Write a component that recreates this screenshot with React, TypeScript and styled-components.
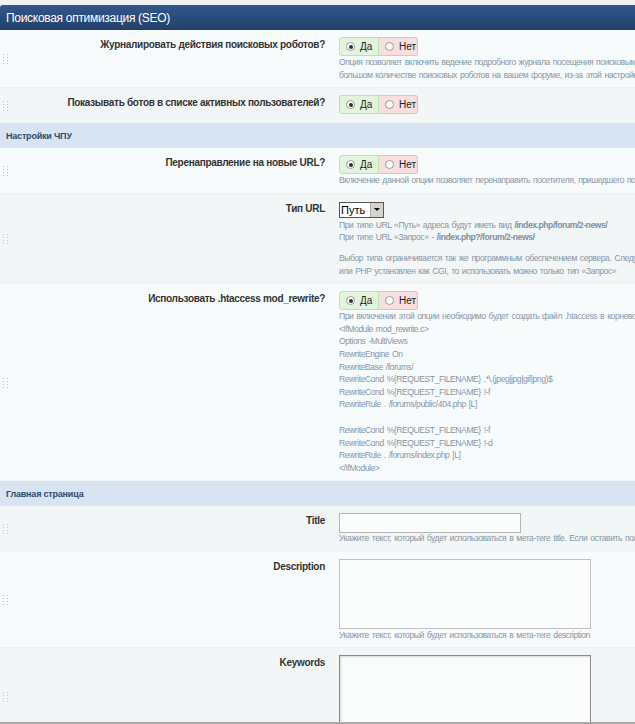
import React from "react"
import styled, { createGlobalStyle } from "styled-components"

const Global = createGlobalStyle`
  html, body { margin: 0; padding: 0; background: #eef2f3; }
  body { font-family: "Liberation Sans", Arial, sans-serif; }
`

const Page = styled.div`
  width: 635px;
  height: 724px;
  box-sizing: border-box;
  padding-top: 5px;
  overflow: hidden;
  border-bottom: 2px solid #a9a9a9;
  background: #eef2f3;
`

const Panel = styled.div`
  width: 900px;
`

const Header = styled.div`
  height: 25px;
  display: flex;
  align-items: center;
  padding-left: 6px;
  border-radius: 3px 0 0 0;
  background: linear-gradient(#30588a, #243f69);
  color: #fff;
  font-size: 12px;
  letter-spacing: -0.3px;
`

const Section = styled.div`
  height: 25px;
  display: flex;
  align-items: center;
  padding-left: 6px;
  background: #d8e4f1;
  color: #2b4c6f;
  font-size: 9px;
  font-weight: bold;
  letter-spacing: -0.2px;
`

const Row = styled.div<{ $alt?: boolean }>`
  display: grid;
  grid-template-columns: 325px 1fr;
  column-gap: 14px;
  padding: 7px 0 6px;
  background: ${p => (p.$alt ? "#f3f6f6" : "#f8fbfc")};
  border-bottom: 1px solid #eef2f2;
`

const LabelCell = styled.div`
  display: flex;
  align-items: flex-start;
`

const Label = styled.div`
  margin-left: auto;
  padding-top: 2px;
  text-align: right;
  color: #333;
  font-size: 10px;
  font-weight: bold;
  line-height: 12px;
  letter-spacing: -0.3px;
`

const HandleBox = styled.svg`
  align-self: center;
  margin-left: 3px;
  flex: none;
`

const Control = styled.div`
  display: flex;
  flex-direction: column;
  align-items: flex-start;
  min-width: 0;
`

const Desc = styled.div`
  color: #8797a7;
  font-size: 8.6px;
  line-height: 12.6px;
  letter-spacing: -0.45px;
  word-spacing: 1px;
  white-space: nowrap;
  b { font-weight: bold; color: #7f8fa0; }
`

const Spacer = styled.div<{ $h: number }>`
  height: ${p => p.$h}px;
`

const Toggle = styled.div`
  display: flex;
  height: 19px;
`

const Choice = styled.label<{ $yes?: boolean }>`
  display: flex;
  align-items: center;
  gap: 5px;
  padding: 0 5px 0 6px;
  width: 27px;
  font-size: 10px;
  color: #222;
  background: ${p => (p.$yes ? "#e2f4dc" : "#f7dfdf")};
  border: 1px solid ${p => (p.$yes ? "#bde0b3" : "#ecbcbc")};
  border-left-width: ${p => (p.$yes ? "1px" : "0")};
  border-radius: ${p => (p.$yes ? "3px 0 0 3px" : "0 3px 3px 0")};
`

const Radio = styled.input`
  appearance: none;
  flex: none;
  box-sizing: border-box;
  margin: 0;
  width: 9px;
  height: 9px;
  border-radius: 50%;
  border: 1px solid #9a9a9a;
  background: #fff;
  position: relative;
  &:checked::after {
    content: "";
    position: absolute;
    left: 1.5px;
    top: 1.5px;
    width: 4px;
    height: 4px;
    border-radius: 50%;
    background: #333;
  }
`

const Select = styled.div`
  display: flex;
  width: 43px;
  height: 14px;
  border: 1px solid #555;
  background: #fff;
  margin: 1px 0 1px;
  font-size: 11px;
  color: #000;
`

const SelectValue = styled.span`
  flex: 1;
  padding-left: 1px;
  line-height: 14px;
`

const SelectArrow = styled.span`
  width: 12px;
  display: flex;
  align-items: center;
  justify-content: center;
  background: #d6d3ce;
  border-left: 1px solid #aaa;
  &::after {
    content: "";
    border-left: 3px solid transparent;
    border-right: 3px solid transparent;
    border-top: 3px solid #000;
  }
`

const TextInput = styled.input`
  width: 182px;
  height: 20px;
  box-sizing: border-box;
  border: 1px solid #b5b5b5;
  background: #fbfdfd;
  margin: 0 0 -1px;
`

const TextArea = styled.textarea<{ $focus?: boolean }>`
  width: 252px;
  height: 70px;
  box-sizing: border-box;
  margin: 0;
  resize: none;
  background: #fbfdfd;
  border: 1px solid ${p => (p.$focus ? "#8a8a8a" : "#c2c2c2")};
  box-shadow: ${p => (p.$focus ? "inset 1px 1px 2px rgba(0,0,0,0.15)" : "none")};
`

const Handle = () => (
  <HandleBox width="6" height="10" viewBox="0 0 6 10">
    {[0, 1].map(c =>
      [0, 1, 2, 3].map(r => (
        <rect key={`${c}${r}`} x={c * 4} y={r * 3} width="1" height="1" fill="#bfc4c8" />
      ))
    )}
  </HandleBox>
)

const YesNo = ({ name }: { name: string }) => (
  <Toggle>
    <Choice $yes>
      <Radio type="radio" name={name} defaultChecked />
      Да
    </Choice>
    <Choice>
      <Radio type="radio" name={name} />
      Нет
    </Choice>
  </Toggle>
)

const Setting = ({ label, alt, children }: { label: string; alt?: boolean; children: React.ReactNode }) => (
  <Row $alt={alt}>
    <LabelCell>
      <Handle />
      <Label>{label}</Label>
    </LabelCell>
    <Control>{children}</Control>
  </Row>
)

const rewrite = [
  "<IfModule mod_rewrite.c>",
  "Options -MultiViews",
  "RewriteEngine On",
  "RewriteBase /forums/",
  "RewriteCond %{REQUEST_FILENAME} .*\\.(jpeg|jpg|gif|png)$",
  "RewriteCond %{REQUEST_FILENAME} !-f",
  "RewriteRule . /forums/public/404.php [L]",
  "",
  "RewriteCond %{REQUEST_FILENAME} !-f",
  "RewriteCond %{REQUEST_FILENAME} !-d",
  "RewriteRule . /forums/index.php [L]",
  "</IfModule>",
]

export default function App() {
  return (
    <>
      <Global />
      <Page>
        <Panel>
          <Header>Поисковая оптимизация (SEO)</Header>

          <Setting label="Журналировать действия поисковых роботов?">
            <YesNo name="log" />
            <Desc>Опция позволяет включить ведение подробного журнала посещения поисковым роботами вашего форума. При</Desc>
            <Desc>большом количестве поисковых роботов на вашем форуме, из-за этой настройки может возрасти нагрузка.</Desc>
          </Setting>

          <Setting label="Показывать ботов в списке активных пользователей?" alt>
            <YesNo name="bots" />
            <Spacer $h={2} />
          </Setting>

          <Section>Настройки ЧПУ</Section>

          <Setting label="Перенаправление на новые URL?">
            <YesNo name="redirect" />
            <Desc>Включение данной опции позволяет перенаправить посетителя, пришедшего по старой ссылке, на новый адрес.</Desc>
          </Setting>

          <Setting label="Тип URL" alt>
            <Select>
              <SelectValue>Путь</SelectValue>
              <SelectArrow />
            </Select>
            <Desc>При типе URL «Путь» адреса будут иметь вид <b>/index.php/forum/2-news/</b></Desc>
            <Desc>При типе URL «Запрос» - <b>/index.php?/forum/2-news/</b></Desc>
            <Spacer $h={8} />
            <Desc>Выбор типа ограничивается так же программным обеспечением сервера. Следует учесть, что если сервер IIS</Desc>
            <Desc>или PHP установлен как CGI, то использовать можно только тип «Запрос»</Desc>
          </Setting>

          <Setting label="Использовать .htaccess mod_rewrite?">
            <YesNo name="htaccess" />
            <Desc>При включении этой опции необходимо будет создать файл .htaccess в корневой папке форума</Desc>
            {rewrite.map((line, i) =>
              line ? <Desc key={i}>{line}</Desc> : <Spacer key={i} $h={13} />
            )}
          </Setting>

          <Section>Главная страница</Section>

          <Setting label="Title" alt>
            <TextInput type="text" />
            <Desc>Укажите текст, который будет использоваться в мета-теге title. Если оставить поле пустым, будет</Desc>
          </Setting>

          <Setting label="Description">
            <TextArea />
            <Desc>Укажите текст, который будет использоваться в мета-теге description</Desc>
          </Setting>

          <Setting label="Keywords" alt>
            <TextArea $focus />
            <Desc>Укажите ключевые слова</Desc>
          </Setting>
        </Panel>
      </Page>
    </>
  )
}
